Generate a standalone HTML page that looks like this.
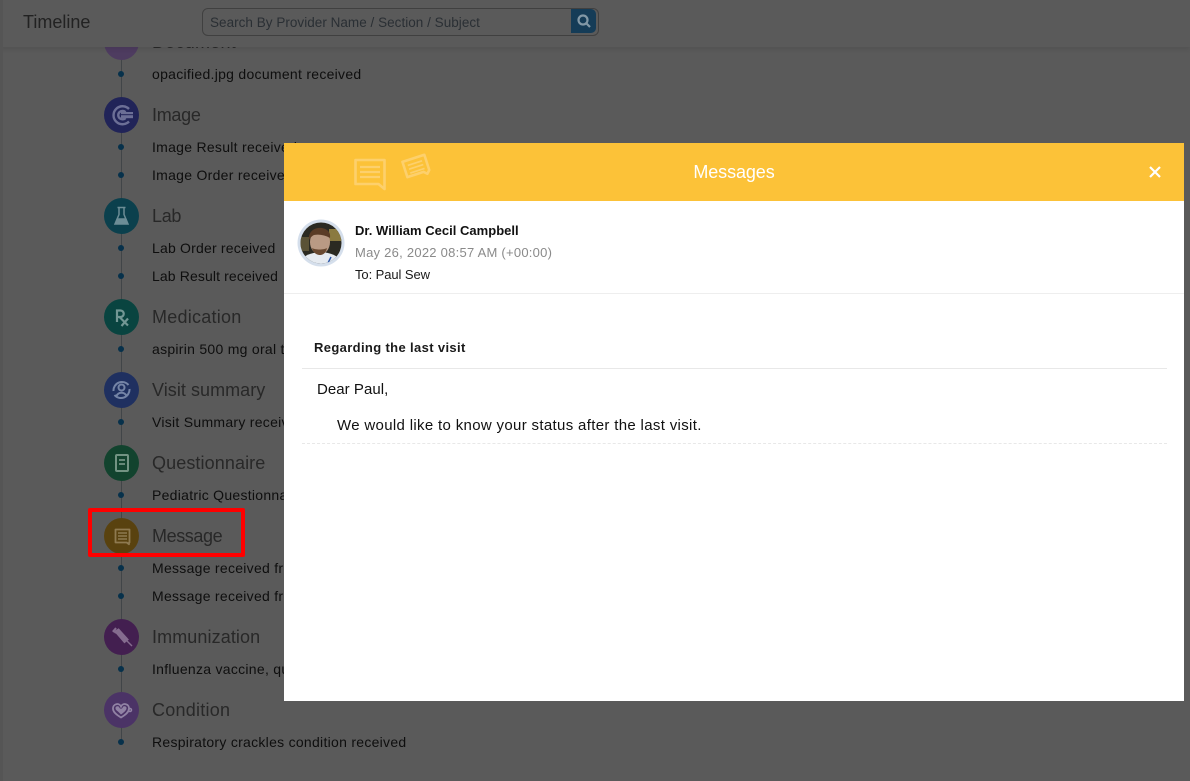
<!DOCTYPE html>
<html>
<head>
<meta charset="utf-8">
<style>
html,body{margin:0;padding:0;width:1190px;height:781px;overflow:hidden;background:#5a5a5a;font-family:"Liberation Sans",sans-serif}
.a{position:absolute;white-space:nowrap}
#page{position:relative;width:1190px;height:781px;overflow:hidden;background:#5a5a5a}
.t{position:absolute;left:152px;font-size:18px;line-height:24px;color:#282828;letter-spacing:.25px;white-space:nowrap}
.s{position:absolute;left:152px;font-size:14px;line-height:20px;color:#0e0e0e;letter-spacing:.28px;white-space:nowrap}
.d{position:absolute;left:118px;width:6px;height:6px;border-radius:50%;background:#07314b}
.c{position:absolute;left:104px;width:35px;height:36px;border-radius:50%}
.c svg{position:absolute;left:0;top:0}
</style>
</head>
<body>
<div id="page">
<div class="a" style="left:121px;top:47px;width:1px;height:695px;background:#414548"></div>

<!-- Timeline items -->
<div class="c" style="top:24px;background:#4e3c60"></div>
<div class="t" style="top:30px">Document</div>
<div class="d" style="top:71px"></div><div class="s" style="top:64px">opacified.jpg document received</div>

<div class="c" style="top:97px;background:#212458"><svg width="35" height="36" fill="none" stroke="#6c6f96" stroke-width="2.400"><path d="M25 12a9 9 0 1 0 0 12.500"/><path d="M21.500 15.200a4.200 4.200 0 1 0 0 5.800"/></svg><svg width="35" height="36"><rect x="17" y="15" width="12" height="2.200" fill="#6c6f96"/><rect x="17" y="18.200" width="12" height="3" fill="#6c6f96"/></svg></div>
<div class="t" style="top:103px;letter-spacing:-.3px">Image</div>
<div class="d" style="top:144px"></div><div class="s" style="top:137px">Image Result received</div>
<div class="d" style="top:172px"></div><div class="s" style="top:165px">Image Order received</div>

<div class="c" style="top:198px;background:#0b404d"><svg width="35" height="36" fill="none" stroke="#6c8d96" stroke-width="1.500"><path d="M13.500 9.500h8M15 9.500v7l-4 9.500h13l-4-9.500v-7"/><path d="M13.200 21h8.600l1.700 4.500H11.500z" fill="#6c8d96"/></svg></div>
<div class="t" style="top:204px;letter-spacing:-.3px">Lab</div>
<div class="d" style="top:245px"></div><div class="s" style="top:238px;letter-spacing:.2px">Lab Order received</div>
<div class="d" style="top:273px"></div><div class="s" style="top:266px;letter-spacing:.12px">Lab Result received</div>

<div class="c" style="top:299px;background:#094440"><svg width="35" height="36" fill="none" stroke="#729794" stroke-width="2.200"><path d="M13 23V11.500h3.500a3 3 0 0 1 0 6.500H13M15.500 18l8.500 8.500M24 19.500l-6.500 7.500"/></svg></div>
<div class="t" style="top:305px">Medication</div>
<div class="d" style="top:346px"></div><div class="s" style="top:339px">aspirin 500 mg oral tablet</div>

<div class="c" style="top:372px;background:#1f3060"><svg width="35" height="36" fill="none" stroke="#7484a6" stroke-width="2"><path d="M9.500 19a8.500 8.500 0 0 1 15-6"/><path d="M25.500 17a8.500 8.500 0 0 1-15 6"/><circle cx="17.500" cy="15.500" r="3"/><path d="M12.500 24a5.500 5.500 0 0 1 10 0"/></svg></div>
<div class="t" style="top:378px;letter-spacing:.05px">Visit summary</div>
<div class="d" style="top:419px"></div><div class="s" style="top:412px">Visit Summary received</div>

<div class="c" style="top:445px;background:#12432e"><svg width="35" height="36" fill="none" stroke="#729383" stroke-width="2"><rect x="12" y="10" width="12" height="16" rx="1"/><path d="M15 15h6M15 19h6" stroke-width="1.800"/></svg></div>
<div class="t" style="top:451px;letter-spacing:.1px">Questionnaire</div>
<div class="d" style="top:492px"></div><div class="s" style="top:485px">Pediatric Questionnaire</div>

<div class="c" style="top:518px;background:#59420f"><svg width="35" height="36" fill="none" stroke="#8e7a50" stroke-width="1.800"><path d="M11.500 11.500h14v13h-.5v1.800l-2.300-1.800H11.500z" stroke-linejoin="round"/><path d="M14 15h9M14 18h9M14 21h9" stroke-width="1.400"/></svg></div>
<div class="t" style="top:524px;letter-spacing:-.4px">Message</div>
<div class="d" style="top:565px"></div><div class="s" style="top:558px">Message received from</div>
<div class="d" style="top:593px"></div><div class="s" style="top:586px">Message received from</div>

<div class="c" style="top:619px;background:#431f50"><svg width="35" height="36" fill="none" stroke="#856c8f" stroke-width="2"><path d="M9 11l3 3M12 9l-3 4"/><path d="M11.500 12.500l3-2 9 10-3 2.500z" fill="#856c8f"/><path d="M23 22l5 5" stroke-width="1.400"/></svg></div>
<div class="t" style="top:625px;letter-spacing:.1px">Immunization</div>
<div class="d" style="top:666px"></div><div class="s" style="top:659px">Influenza vaccine, quadrivalent</div>

<div class="c" style="top:692px;background:#4b3366"><svg width="35" height="36" fill="none" stroke="#9182a4" stroke-width="1.500"><path d="M17 25.500c-5-3-8-5.500-8-9a4.200 4.200 0 0 1 8-2 4.200 4.200 0 0 1 8 2c0 3.500-3 6-8 9z" stroke-width="1.800"/><path d="M14 19.500c-1.500-1-2.500-2-2.500-3a2 2 0 0 1 4-.5L17 17l1.500-1a2 2 0 0 1 4 .5c0 1.500-2.500 4-5.500 6z" fill="#9182a4" stroke="none"/><circle cx="26" cy="18" r="1.500"/></svg></div>
<div class="t" style="top:698px">Condition</div>
<div class="d" style="top:739px"></div><div class="s" style="top:732px">Respiratory crackles condition received</div>

<!-- Top bar -->
<div class="a" style="left:0;top:0;width:1190px;height:47px;background:#5a5a5a;box-shadow:0 2px 5px rgba(0,0,0,.1)"></div>
<div class="a" style="left:23px;top:10px;font-size:18px;line-height:24px;color:#222;letter-spacing:0">Timeline</div>
<div class="a" style="left:202px;top:8px;width:395px;height:26px;border:1px solid #404040;border-radius:6px"></div>
<div class="a" style="left:210px;top:12px;font-size:13.500px;line-height:21px;color:#2a2f34;letter-spacing:.03px">Search By Provider Name / Section / Subject</div>
<div class="a" style="left:571px;top:9px;width:25px;height:24px;background:#153c57;border-radius:0 5px 5px 0"><svg width="25" height="24" fill="none" stroke="#8298a6" stroke-width="2.200"><circle cx="12" cy="11" r="4.500"/><path d="M15.500 14.500l3.500 3.500"/></svg></div>

<div class="a" style="left:0;top:0;width:3px;height:781px;background:#555"></div>

<!-- Red box -->
<div class="a" style="left:88px;top:508px;width:149px;height:41px;border:4px solid #ff0000;border-radius:2px"></div>

<!-- Modal -->
<div class="a" style="left:284px;top:143px;width:900px;height:558px;background:#fff;overflow:hidden">
  <div class="a" style="left:0;top:0;width:900px;height:58px;background:#fcc238"></div>
  <svg class="a" style="left:65px;top:10px" width="90" height="42" fill="none" stroke="#fdd06c" stroke-width="2.600" stroke-linejoin="round">
    <path d="M6.500 7h29v29l-6-5H6.500z"/>
    <path d="M11 14h20M11 19h20M11 24h20" stroke-width="2.200"/>
    <g transform="rotate(-18 67 15)"><path d="M56 5h23v16l-3 3-3-3H56z"/><path d="M60 10h15M60 14h15M60 18h15" stroke-width="1.700"/></g>
  </svg>
  <div class="a" style="left:0;top:17px;width:900px;text-align:center;font-size:18px;line-height:24px;color:#fff;letter-spacing:-.1px">Messages</div>
  <svg class="a" style="left:865px;top:23px" width="12" height="12" stroke="#fff" stroke-width="2.200" fill="none"><path d="M1 1l10 10M11 1L1 11"/></svg>

  <svg class="a" style="left:13px;top:76px" width="48" height="48" viewBox="0 0 48 48">
    <defs><clipPath id="av"><circle cx="24" cy="24" r="20.500"/></clipPath></defs>
    <circle cx="24" cy="24" r="23.500" fill="#d5dfec"/>
    <g clip-path="url(#av)">
      <rect width="48" height="48" fill="#2b2a22"/>
      <rect x="32" y="10" width="14" height="12" fill="#8a7a40"/>
      <rect x="2" y="18" width="10" height="14" fill="#5a5236"/>
      <path d="M2 48c1-11 10-14 22-15 11 1 20 4 22 15z" fill="#e6ebf1"/>
      <ellipse cx="23" cy="23" rx="10" ry="12.500" fill="#b99a84"/>
      <path d="M12 21c-1-8 5-13 13-12 5 1 9 4 8 10-5-3-11-4-16-3-2 1-3 2-5 5z" fill="#5a3c26"/>
      <path d="M15 29c3 2 12 2 15 0-1 5-4 7-7 7s-7-2-8-7z" fill="#6a4a32"/>
      <path d="M31 44l3-6" stroke="#2d57a8" stroke-width="1.500"/>
    </g>
  </svg>
  <div class="a" style="left:71px;top:78px;font-size:13px;line-height:20px;font-weight:bold;color:#111;letter-spacing:.02px">Dr. William Cecil Campbell</div>
  <div class="a" style="left:71px;top:100px;font-size:13px;line-height:20px;color:#8a8a8a;letter-spacing:.25px">May 26, 2022 08:57 AM (+00:00)</div>
  <div class="a" style="left:71px;top:122px;font-size:13px;line-height:20px;color:#1a1a1a;letter-spacing:-.08px">To: Paul Sew</div>
  <div class="a" style="left:0;top:150px;width:900px;height:1px;background:#eee"></div>

  <div class="a" style="left:30px;top:195px;font-size:13px;line-height:20px;font-weight:bold;color:#1a1a1a;letter-spacing:.36px">Regarding the last visit</div>
  <div class="a" style="left:18px;top:225px;width:865px;height:1px;background:#e8e8e8"></div>
  <div class="a" style="left:33px;top:237px;font-size:15px;line-height:20px;color:#111;letter-spacing:.05px">Dear Paul,</div>
  <div class="a" style="left:53px;top:273px;font-size:15px;line-height:20px;color:#111;letter-spacing:.33px">We would like to know your status after the last visit.</div>
  <div class="a" style="left:18px;top:300px;width:865px;border-top:1px dashed #e8e8e8"></div>
</div>
</div>
</body>
</html>
